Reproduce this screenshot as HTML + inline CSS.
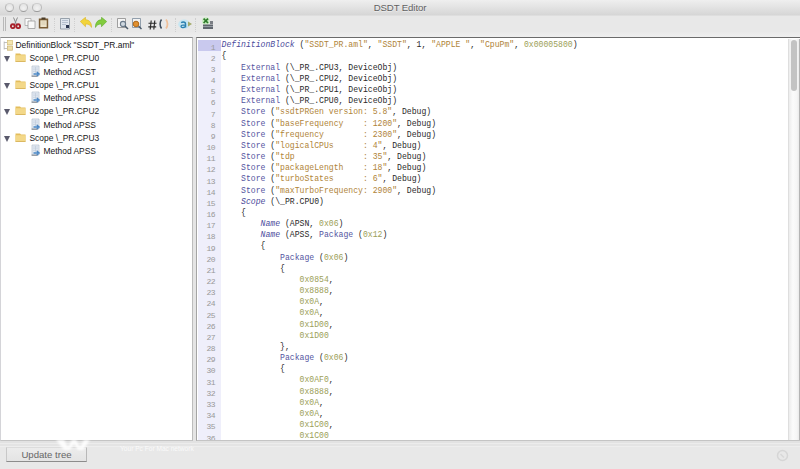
<!DOCTYPE html>
<html><head><meta charset="utf-8">
<style>
*{margin:0;padding:0;box-sizing:border-box}
html,body{width:800px;height:469px;overflow:hidden;background:#e6e6e6;font-family:"Liberation Sans",sans-serif;position:relative}
#title{position:absolute;left:0;top:0;width:800px;height:15px;background:linear-gradient(#efefef,#d6d6d6);box-shadow:0 1px 0 #dedede;z-index:1}
#title .t{position:absolute;left:0;width:800px;top:1.5px;text-align:center;font-size:9.6px;letter-spacing:-0.1px;color:#626262;text-shadow:0 1px 0 rgba(255,255,255,.45)}
.tl{position:absolute;top:2.8px;width:9.6px;height:9.6px;border-radius:50%;background:radial-gradient(circle at 50% 60%,#f2f2f2,#dedede);border:1px solid #b8b8b8;border-top-color:#cfcfcf;border-bottom-color:#9c9c9c}
#tb{position:absolute;left:0;top:15px;width:800px;height:22px;background:#e8e8e8}
#tb .lo{position:absolute;left:0;top:17px;width:800px;height:5px;background:linear-gradient(#e9e9e9,#eeeeee)}
#tb svg{position:absolute}
.grip{position:absolute;top:1.5px;width:1px;height:14px;background:#b8b8b8}
.sep{position:absolute;top:3px;width:1px;height:14px;border-left:1px dotted #cfcfcf}
#tree{position:absolute;left:0;top:37px;width:193px;height:404px;background:#fff;border-top:1px solid #8a8a8a;border-right:1px solid #bcbcbc;border-left:1px solid #d4d4d8;border-bottom:1px solid #c4c4c4}
.row{position:absolute;height:13px;font-size:8.44px;color:#151515;white-space:pre;line-height:13px}
#tree svg{position:absolute}
#split{position:absolute;left:193px;top:37px;width:3px;height:404px;background:#e4e4e4}
#ed{position:absolute;left:196px;top:37px;width:604px;height:404px;background:#fff;border-top:1px solid #6a6a6a;border-left:1px solid #a4a4a4;border-bottom:1px solid #c4c4c4;overflow:hidden}
#gut{position:absolute;left:1px;top:2px;width:23px;height:402px;background:#efeffb}
#hl{position:absolute;left:1px;top:2px;width:23px;height:11px;background:#c9c9ee}
#nums{position:absolute;left:0px;top:3.5px;width:17.8px;text-align:right;font-family:"Liberation Mono",monospace;font-size:8px;letter-spacing:-0.7px;line-height:11.17px;color:#999;white-space:pre}
#code{position:absolute;left:24.5px;top:1.3px;font-family:"Liberation Mono",monospace;font-size:8.13px;line-height:11.17px;color:#2a2a2a;white-space:pre}
#code b{font-weight:normal}
.k{color:#5454a0}.i{color:#4c4c9c;font-style:italic}.s{color:#b08438}.n{color:#9ca058}
#sb{position:absolute;left:591px;top:1px;width:12px;height:402px;background:linear-gradient(90deg,#ececec,#fbfbfb 35%,#f6f6f6 70%,#e6e6e6);border-left:1px solid #dedede}
#sb .th{position:absolute;left:2px;top:1px;width:5.5px;height:51px;border-radius:3px;background:#c3c3c3}
#sb .edge{position:absolute;right:0;top:0;width:1px;height:402px;background:#b4b4b4}
#bot{position:absolute;left:0;top:441px;width:800px;height:28px;background:#e8e8e8}
#bot .hl{position:absolute;left:0;top:0;width:800px;height:6px;background:linear-gradient(#e2e2e2 0,#e2e2e2 2px,#ececec 2px,#ececec 3px,#e4e4e4 3px,#e4e4e4 5px,#eeeeee 5px)}
#btn{position:absolute;left:6px;top:6px;width:81px;height:15px;border:1px solid #b8b8b8;border-top-color:#dcdcdc;border-left-color:#c8c8c8;border-bottom-color:#8c8c8c;background:linear-gradient(#ececec,#e4e4e4);font-size:9.6px;color:#666;text-align:center;line-height:13px}
#wm{position:absolute;left:120px;top:3.5px;font-size:6.6px;color:rgba(255,255,255,.8);white-space:pre}
</style></head><body>
<div id="title">
 <div class="tl" style="left:4.8px"></div>
 <div class="tl" style="left:18.6px"></div>
 <div class="tl" style="left:32.4px"></div>
 <div class="t">DSDT Editor</div>
</div>
<div id="tb"><div class="lo"></div>
 <div class="grip" style="left:3px"></div><div class="grip" style="left:5px"></div>
 
<svg style="left:10px;top:2px" width="11" height="12" viewBox="0 0 11 12"><path d="M3.5 0.5L6.5 7.5M7.5 0.5L4.5 7.5" stroke="#8a8a8a" stroke-width="1"/><circle cx="2.8" cy="9.2" r="1.9" fill="none" stroke="#a8202a" stroke-width="1.9"/><circle cx="8.2" cy="9.2" r="1.9" fill="none" stroke="#a8202a" stroke-width="1.9"/></svg>
<svg style="left:24px;top:3px" width="12" height="11" viewBox="0 0 12 11"><path d="M1 0.5h6v7h-6z" fill="#fafafa" stroke="#a8a8a8" stroke-width="0.8"/><path d="M4 3h7v7.5h-7z" fill="#f8f8f8" stroke="#9a9a9a" stroke-width="0.8"/></svg>
<svg style="left:38px;top:2px" width="11" height="12" viewBox="0 0 11 12"><path d="M0.8 1.5h9.4v10h-9.4z" fill="#7a5c34"/><path d="M2.3 3.3h6.4v6.7h-6.4z" fill="#eee4cc"/><path d="M3.5 5h4M3.5 7h4" stroke="#c8b898" stroke-width="0.6"/><path d="M3.5 0.5h4v2h-4z" fill="#4a3c28"/></svg>
<svg style="left:60px;top:3px" width="11" height="12" viewBox="0 0 11 12"><path d="M0.5 0.5h9v10.5h-9z" fill="#dfe6ee" stroke="#8e98a4" stroke-width="0.9"/><path d="M2 2.5h6M2 4.5h6M2 6.5h4" stroke="#a9b6c6" stroke-width="0.8"/><path d="M6 7h3v3h-3z" fill="#2a3650"/></svg>
<div class="sep" style="left:54px"></div>
<div class="sep" style="left:74px"></div>
<svg style="left:80px;top:2px" width="12" height="12" viewBox="0 0 12 12"><path d="M0.3 4.5L5.5 0.3V2.8C8.5 2.8 11.5 4.5 11.7 10.5C10.3 8 8.5 7 5.5 7V9.7Z" fill="#f2d43a" stroke="#d8b428" stroke-width="0.6"/></svg>
<svg style="left:95px;top:2px" width="12" height="12" viewBox="0 0 12 12"><path d="M11.7 4.5L6.5 0.3V2.8C3.5 2.8 0.5 4.5 0.3 10.5C1.7 8 3.5 7 6.5 7V9.7Z" fill="#82cc3e" stroke="#5eaa2a" stroke-width="0.6"/></svg>
<div class="sep" style="left:111px"></div>
<svg style="left:117px;top:3px" width="12" height="12" viewBox="0 0 12 12"><path d="M0.5 0.5h8v9h-8z" fill="#f6f6f6" stroke="#8a8a8a" stroke-width="0.8"/><circle cx="6" cy="6" r="2.6" fill="#cfd8e0" stroke="#6a7a8a" stroke-width="1.1"/><path d="M8 8l3 3" stroke="#4a5a6a" stroke-width="1.5"/></svg>
<svg style="left:131px;top:3px" width="12" height="12" viewBox="0 0 12 12"><path d="M1.5 0.5h8v9h-8z" fill="#f2f2f2" stroke="#7a8a9a" stroke-width="0.8"/><circle cx="5" cy="6" r="2.8" fill="#e09030" stroke="#b06818" stroke-width="1"/><path d="M7.5 8l3 3" stroke="#4a5a6a" stroke-width="1.5"/></svg>
<svg style="left:147.5px;top:4.5px" width="9" height="10" viewBox="0 0 9 10"><path d="M3.2 0.5L2.2 9.5M6.8 0.5L5.8 9.5M0.5 3.2H8.5M0.3 6.8H8.2" stroke="#2a2a2a" stroke-width="1.15"/></svg>
<svg style="left:158px;top:3px" width="12" height="12" viewBox="0 0 12 12"><path d="M3.5 1.5C1.6 4 1.6 8 3.5 10.5" stroke="#3c4a5a" stroke-width="1.5" fill="none"/><path d="M8 1.5C10 4 10 8 8 10.5" stroke="#f0c09a" stroke-width="1.8" fill="none"/></svg>

<div class="sep" style="left:175px"></div>
<svg style="left:178px;top:4px" width="15" height="10" viewBox="0 0 15 10"><ellipse cx="6" cy="5.2" rx="5.8" ry="4.6" fill="#c6e6f2"/><path d="M7.6 8.5V5.2C7.6 3.6 6.6 3 5.3 3C4.4 3 3.6 3.3 3.2 3.7M7.6 5.8C5 5.8 3 6 3 7.3C3 8.3 3.8 8.7 4.8 8.7C6.2 8.7 7.6 7.8 7.6 6.6" stroke="#2a80b0" stroke-width="1.3" fill="none"/><path d="M10 2.5L14 5L10 7.5z" fill="#a2aa6a"/></svg>
<div class="sep" style="left:195px"></div>
<svg style="left:201px;top:2px" width="13" height="13" viewBox="0 0 13 13"><circle cx="4.8" cy="4" r="3.8" fill="#c8ecc0"/><path d="M2.6 1.6l4.4 4.4M7 1.6l-4.4 4.4" stroke="#2e7a2a" stroke-width="1.7"/><path d="M9 4h3v3h-3z" fill="#7a7e84"/><path d="M2 7.5h10v4.5h-10z" fill="#60666e"/><path d="M2 9.5h10" stroke="#a4aab2" stroke-width="0.8"/></svg>

</div>
<div id="tree"><div style="position:absolute;left:2px;top:2.00px;line-height:0"><svg width="11" height="11" viewBox="0 0 11 11"><path d="M1.2 1.5V9.5M1.2 2.5H4M1.2 8.5H4" stroke="#b0b0b0" stroke-width="0.8" fill="none"/><rect x="4.5" y="0.5" width="5" height="4.2" fill="#f4e6b0" stroke="#d8c078" stroke-width="0.7"/><rect x="4.5" y="6" width="5" height="4.2" fill="#efe0a8" stroke="#c8b070" stroke-width="0.7"/></svg></div>
<div class="row" style="left:14.5px;top:1.00px">DefinitionBlock "SSDT_PR.aml"</div>
<div style="position:absolute;left:2.5px;top:18.28px;line-height:0"><svg width="6" height="6" viewBox="0 0 6 6"><path d="M0 0H6L3 6Z" fill="#5a5a6c"/></svg></div>
<div style="position:absolute;left:14.2px;top:14.28px;line-height:0"><svg width="11" height="10" viewBox="0 0 11 10"><path d="M0.5 1.5h4.5l1 1h4.5v7h-10z" fill="#e3bd5c"/><path d="M0.5 3.2h10v6.3h-10z" fill="#f3d889"/><path d="M0.5 9.5h10" stroke="#d4ae52" stroke-width="0.8"/></svg></div>
<div class="row" style="left:28.5px;top:14.28px">Scope \_PR.CPU0</div>
<div style="position:absolute;left:28.5px;top:26.76px;line-height:0"><svg width="12" height="12" viewBox="0 0 12 12"><path d="M2 1h7v10h-7z" fill="#e6edf5" stroke="#b4c0ce" stroke-width="0.7"/><path d="M3 3h5M3 4.8h5M3 6.6h5M5.5 2v6" stroke="#bcc8d6" stroke-width="0.6"/><path d="M1.5 11.2h6" stroke="#5a626c" stroke-width="0.8"/><path d="M3.5 9h4.3M6.8 7l2.3 2l-2.3 2" stroke="#4a86c4" stroke-width="1.4" fill="none"/></svg></div>
<div class="row" style="left:42.5px;top:27.56px">Method ACST</div>
<div style="position:absolute;left:2.5px;top:44.84px;line-height:0"><svg width="6" height="6" viewBox="0 0 6 6"><path d="M0 0H6L3 6Z" fill="#5a5a6c"/></svg></div>
<div style="position:absolute;left:14.2px;top:40.84px;line-height:0"><svg width="11" height="10" viewBox="0 0 11 10"><path d="M0.5 1.5h4.5l1 1h4.5v7h-10z" fill="#e3bd5c"/><path d="M0.5 3.2h10v6.3h-10z" fill="#f3d889"/><path d="M0.5 9.5h10" stroke="#d4ae52" stroke-width="0.8"/></svg></div>
<div class="row" style="left:28.5px;top:40.84px">Scope \_PR.CPU1</div>
<div style="position:absolute;left:28.5px;top:53.32px;line-height:0"><svg width="12" height="12" viewBox="0 0 12 12"><path d="M2 1h7v10h-7z" fill="#e6edf5" stroke="#b4c0ce" stroke-width="0.7"/><path d="M3 3h5M3 4.8h5M3 6.6h5M5.5 2v6" stroke="#bcc8d6" stroke-width="0.6"/><path d="M1.5 11.2h6" stroke="#5a626c" stroke-width="0.8"/><path d="M3.5 9h4.3M6.8 7l2.3 2l-2.3 2" stroke="#4a86c4" stroke-width="1.4" fill="none"/></svg></div>
<div class="row" style="left:42.5px;top:54.12px">Method APSS</div>
<div style="position:absolute;left:2.5px;top:71.40px;line-height:0"><svg width="6" height="6" viewBox="0 0 6 6"><path d="M0 0H6L3 6Z" fill="#5a5a6c"/></svg></div>
<div style="position:absolute;left:14.2px;top:67.40px;line-height:0"><svg width="11" height="10" viewBox="0 0 11 10"><path d="M0.5 1.5h4.5l1 1h4.5v7h-10z" fill="#e3bd5c"/><path d="M0.5 3.2h10v6.3h-10z" fill="#f3d889"/><path d="M0.5 9.5h10" stroke="#d4ae52" stroke-width="0.8"/></svg></div>
<div class="row" style="left:28.5px;top:67.40px">Scope \_PR.CPU2</div>
<div style="position:absolute;left:28.5px;top:79.88px;line-height:0"><svg width="12" height="12" viewBox="0 0 12 12"><path d="M2 1h7v10h-7z" fill="#e6edf5" stroke="#b4c0ce" stroke-width="0.7"/><path d="M3 3h5M3 4.8h5M3 6.6h5M5.5 2v6" stroke="#bcc8d6" stroke-width="0.6"/><path d="M1.5 11.2h6" stroke="#5a626c" stroke-width="0.8"/><path d="M3.5 9h4.3M6.8 7l2.3 2l-2.3 2" stroke="#4a86c4" stroke-width="1.4" fill="none"/></svg></div>
<div class="row" style="left:42.5px;top:80.68px">Method APSS</div>
<div style="position:absolute;left:2.5px;top:97.96px;line-height:0"><svg width="6" height="6" viewBox="0 0 6 6"><path d="M0 0H6L3 6Z" fill="#5a5a6c"/></svg></div>
<div style="position:absolute;left:14.2px;top:93.96px;line-height:0"><svg width="11" height="10" viewBox="0 0 11 10"><path d="M0.5 1.5h4.5l1 1h4.5v7h-10z" fill="#e3bd5c"/><path d="M0.5 3.2h10v6.3h-10z" fill="#f3d889"/><path d="M0.5 9.5h10" stroke="#d4ae52" stroke-width="0.8"/></svg></div>
<div class="row" style="left:28.5px;top:93.96px">Scope \_PR.CPU3</div>
<div style="position:absolute;left:28.5px;top:106.44px;line-height:0"><svg width="12" height="12" viewBox="0 0 12 12"><path d="M2 1h7v10h-7z" fill="#e6edf5" stroke="#b4c0ce" stroke-width="0.7"/><path d="M3 3h5M3 4.8h5M3 6.6h5M5.5 2v6" stroke="#bcc8d6" stroke-width="0.6"/><path d="M1.5 11.2h6" stroke="#5a626c" stroke-width="0.8"/><path d="M3.5 9h4.3M6.8 7l2.3 2l-2.3 2" stroke="#4a86c4" stroke-width="1.4" fill="none"/></svg></div>
<div class="row" style="left:42.5px;top:107.24px">Method APSS</div></div>
<div id="split"></div>
<div id="ed"><div id="gut"></div><div id="hl"></div><div id="nums">1
2
3
4
5
6
7
8
9
10
11
12
13
14
15
16
17
18
19
20
21
22
23
24
25
26
27
28
29
30
31
32
33
34
35
36</div><div id="code"><b class=i>DefinitionBlock</b> (<b class=s>&quot;SSDT_PR.aml&quot;</b>, <b class=s>&quot;SSDT&quot;</b>, 1, <b class=s>&quot;APPLE &quot;</b>, <b class=s>&quot;CpuPm&quot;</b>, <b class=n>0x00005800</b>)
{
    <b class=k>External</b> (\_PR_.CPU3, DeviceObj)
    <b class=k>External</b> (\_PR_.CPU2, DeviceObj)
    <b class=k>External</b> (\_PR_.CPU1, DeviceObj)
    <b class=k>External</b> (\_PR_.CPU0, DeviceObj)
    <b class=k>Store</b> (<b class=s>&quot;ssdtPRGen version: 5.8&quot;</b>, Debug)
    <b class=k>Store</b> (<b class=s>&quot;baseFrequency    : 1200&quot;</b>, Debug)
    <b class=k>Store</b> (<b class=s>&quot;frequency        : 2300&quot;</b>, Debug)
    <b class=k>Store</b> (<b class=s>&quot;logicalCPUs      : 4&quot;</b>, Debug)
    <b class=k>Store</b> (<b class=s>&quot;tdp              : 35&quot;</b>, Debug)
    <b class=k>Store</b> (<b class=s>&quot;packageLength    : 18&quot;</b>, Debug)
    <b class=k>Store</b> (<b class=s>&quot;turboStates      : 6&quot;</b>, Debug)
    <b class=k>Store</b> (<b class=s>&quot;maxTurboFrequency: 2900&quot;</b>, Debug)
    <b class=i>Scope</b> (\_PR.CPU0)
    {
        <b class=i>Name</b> (APSN, <b class=n>0x06</b>)
        <b class=i>Name</b> (APSS, <b class=k>Package</b> (<b class=n>0x12</b>)
        {
            <b class=k>Package</b> (<b class=n>0x06</b>)
            {
                <b class=n>0x0854</b>,
                <b class=n>0x8888</b>,
                <b class=n>0x0A</b>,
                <b class=n>0x0A</b>,
                <b class=n>0x1D00</b>,
                <b class=n>0x1D00</b>
            },
            <b class=k>Package</b> (<b class=n>0x06</b>)
            {
                <b class=n>0x0AF0</b>,
                <b class=n>0x8888</b>,
                <b class=n>0x0A</b>,
                <b class=n>0x0A</b>,
                <b class=n>0x1C00</b>,
                <b class=n>0x1C00</b></div>
 <div id="sb"><div class="th"></div><div class="edge"></div></div>
</div>
<div id="bot"><div class="hl"></div><div id="btn">Update tree</div><div id="wm">Your Pc For Mac network</div>
 <svg style="position:absolute;left:776px;top:8px" width="13" height="13" viewBox="0 0 13 13"><circle cx="6.5" cy="6.5" r="5" fill="none" stroke="#d6d6d6" stroke-width="1.5"/><path d="M4.5 5 L8 8.5" stroke="#d8d8d8" stroke-width="1.5"/></svg>
</div>
<svg style="position:absolute;left:54px;top:438px" width="38" height="14" viewBox="0 0 38 14"><filter id="bl"><feGaussianBlur stdDeviation="1"/></filter><path d="M2 2H10L14 9L18 2H22L26 9L30 2H36L29 12H24L20 6L16 12H10Z" fill="rgba(255,255,255,.9)" filter="url(#bl)"/></svg>
</body></html>
